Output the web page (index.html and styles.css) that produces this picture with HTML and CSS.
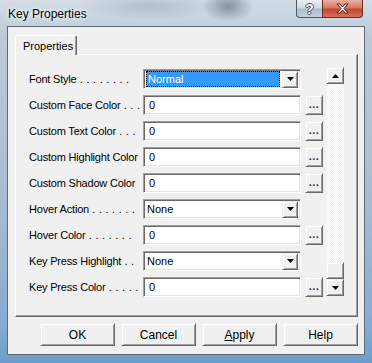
FILE: index.html
```html
<!DOCTYPE html>
<html lang="en">
<head>
  <meta charset="UTF-8" />
  <title>Key Properties</title>
  <link rel="stylesheet" href="styles.css">
</head>
<body>
  <div class="window">
    <!-- Title bar -->
    <div class="titlebar">
      <span class="title">Key Properties</span>
      <div class="caption-btns">
        <span class="cap-btn help-cap">?</span>
        <span class="cap-btn close-cap">
          <svg width="13" height="11" viewBox="0 0 13 11">
            <path d="M1 1h3l2.5 3 2.5-3h3l-4 4.5 4 4.5h-3l-2.5-3-2.5 3h-3l4-4.5z" fill="#fff" stroke="#5b1d14" stroke-width="1"/>
          </svg>
        </span>
      </div>
    </div>

    <div class="client">
      <div class="tabs">
        <span class="tab">Properties</span>
      </div>

      <div class="tab-panel">
        <div class="rows">
          <div class="row">
            <span class="label">Font Style<span class="lead"> . . . . . . . .</span></span>
            <div class="combo">
              <span class="combo-value selected">Normal</span>
              <span class="arrow-btn"><svg width="7" height="4" viewBox="0 0 7 4"><path d="M0 0h7l-3.5 4z" fill="#000"/></svg></span>
            </div>
          </div>
          <div class="row">
            <span class="label">Custom Face Color<span class="lead"> . . .</span></span>
            <div class="field">0</div>
            <span class="dots-btn">...</span>
          </div>
          <div class="row">
            <span class="label">Custom Text Color<span class="lead"> . . .</span></span>
            <div class="field">0</div>
            <span class="dots-btn">...</span>
          </div>
          <div class="row">
            <span class="label">Custom Highlight Color</span>
            <div class="field">0</div>
            <span class="dots-btn">...</span>
          </div>
          <div class="row">
            <span class="label">Custom Shadow Color</span>
            <div class="field">0</div>
            <span class="dots-btn">...</span>
          </div>
          <div class="row">
            <span class="label">Hover Action<span class="lead"> . . . . . . .</span></span>
            <div class="combo">
              <span class="combo-value">None</span>
              <span class="arrow-btn"><svg width="7" height="4" viewBox="0 0 7 4"><path d="M0 0h7l-3.5 4z" fill="#000"/></svg></span>
            </div>
          </div>
          <div class="row">
            <span class="label">Hover Color<span class="lead"> . . . . . . .</span></span>
            <div class="field">0</div>
            <span class="dots-btn">...</span>
          </div>
          <div class="row">
            <span class="label">Key Press Highlight<span class="lead"> . .</span></span>
            <div class="combo">
              <span class="combo-value">None</span>
              <span class="arrow-btn"><svg width="7" height="4" viewBox="0 0 7 4"><path d="M0 0h7l-3.5 4z" fill="#000"/></svg></span>
            </div>
          </div>
          <div class="row">
            <span class="label">Key Press Color<span class="lead"> . . . . .</span></span>
            <div class="field">0</div>
            <span class="dots-btn">...</span>
          </div>
        </div>

        <!-- Vertical scrollbar -->
        <div class="vscroll">
          <span class="sb-btn"><svg width="7" height="4" viewBox="0 0 7 4"><path d="M3.5 0l3.5 4h-7z" fill="#000"/></svg></span>
          <span class="sb-track"></span>
          <span class="sb-thumb"></span>
          <span class="sb-btn"><svg width="7" height="4" viewBox="0 0 7 4"><path d="M0 0h7l-3.5 4z" fill="#000"/></svg></span>
        </div>
      </div>

      <div class="buttons">
        <button class="dlg-btn">OK</button>
        <button class="dlg-btn">Cancel</button>
        <button class="dlg-btn"><u>A</u>pply</button>
        <button class="dlg-btn">Help</button>
      </div>
    </div>
  </div>
</body>
</html>
```

FILE: styles.css
```css
body {
  margin: 0;
  font-family: "Liberation Sans", Arial, sans-serif;
  font-size: 11px;
  color: #000;
}
.window {
  width: 372px;
  height: 363px;
  box-sizing: border-box;
  padding: 0 7px 8px 7px;
  display: flex;
  flex-direction: column;
  background:
    radial-gradient(ellipse 26px 16px at 228px 6px, rgba(70, 85, 100, 0.55), transparent),
    radial-gradient(ellipse 70px 14px at 150px 6px, rgba(120, 140, 160, 0.35), transparent),
    linear-gradient(180deg, #d4dde6 0%, #bccad8 10%, #a8bcd0 55%, #86abd0 90%, #6d9ccb 100%);
}
.titlebar {
  height: 26px;
  display: flex;
  justify-content: space-between;
  align-items: flex-start;
  flex-shrink: 0;
}
.title {
  font-size: 12px;
  padding: 7px 0 0 1px;
  text-shadow: 0 0 6px #fff, 0 0 3px #fff;
}
.caption-btns {
  display: flex;
  margin-right: 2px;
}
.cap-btn {
  height: 18px;
  box-sizing: border-box;
  display: flex;
  align-items: center;
  justify-content: center;
  border: 1px solid #4e5b68;
  border-top: none;
}
.help-cap {
  width: 26px;
  border-right: none;
  border-radius: 0 0 0 4px;
  background: linear-gradient(180deg, #e9eef3 0%, #d1dbe5 45%, #aebdcc 55%, #c3d0dd 100%);
  color: #f4f6f8;
  font-size: 14px;
  font-weight: bold;
  text-shadow: 1px 0 #4a5560, -1px 0 #4a5560, 0 1px #4a5560, 0 -1px #4a5560;
}
.close-cap {
  width: 41px;
  border-radius: 0 0 4px 0;
  border-color: #6b2a22;
  background: linear-gradient(180deg, #eab3a6 0%, #d77863 45%, #c4462f 55%, #d5705a 100%);
}
.client {
  flex: 1;
  background: #f0f0f0;
  border: 1px solid #5d6b79;
  display: flex;
  flex-direction: column;
}
.tabs {
  display: flex;
  padding: 8px 0 0 7px;
}
.tab {
  width: 62px;
  height: 20px;
  box-sizing: border-box;
  padding: 4px 0 0 7px;
  border-top: 1px solid #fff;
  border-left: 1px solid #fff;
  border-right: 1px solid #696969;
  box-shadow: inset -1px 0 #a0a0a0;
  border-radius: 2px 2px 0 0;
  margin-bottom: -1px;
  background: #f0f0f0;
  position: relative;
}
.tab-panel {
  margin-left: 7px;
  width: 343px;
  height: 263px;
  box-sizing: border-box;
  border-top: 1px solid #fff;
  border-left: 1px solid #fff;
  border-right: 1px solid #696969;
  border-bottom: 1px solid #696969;
  box-shadow: inset -1px -1px #a0a0a0;
  padding: 12px 0 0 13px;
  display: flex;
  align-items: flex-start;
}
.rows {
  margin-top: 2px;
  display: flex;
  flex-direction: column;
  gap: 6px;
}
.row {
  display: grid;
  grid-template-columns: 110px 158px 18px;
  column-gap: 4px;
  height: 20px;
  align-items: center;
}
.label {
  letter-spacing: -0.2px;
  white-space: nowrap;
}
.lead {
  letter-spacing: 0.25px;
}
.field,
.combo {
  height: 20px;
  box-sizing: border-box;
  background: #fff;
  border: 1px solid;
  border-color: #a0a0a0 #fff #fff #a0a0a0;
  box-shadow: inset 1px 1px #696969, inset -1px -1px #e3e3e3;
}
.field {
  padding: 3px 0 0 5px;
}
.combo {
  display: flex;
  align-items: center;
  padding: 1px 2px 1px 1px;
}
.combo-value {
  flex: 1;
  height: 16px;
  box-sizing: border-box;
  padding: 2px 0 0 2px;
  margin-right: 1px;
}
.combo-value.selected {
  background: #3399ff;
  color: #fff;
  outline: 1px dotted #000;
  outline-offset: -1px;
  margin: 0 2px 0 1px;
}
.arrow-btn,
.dots-btn,
.sb-btn,
.sb-thumb {
  box-sizing: border-box;
  background: #f0f0f0;
  border: 1px solid;
  border-color: #f0f0f0 #696969 #696969 #f0f0f0;
  box-shadow: inset 1px 1px #fff, inset -1px -1px #a0a0a0;
  display: flex;
  align-items: center;
  justify-content: center;
}
.arrow-btn {
  width: 16px;
  height: 17px;
}
.dots-btn {
  height: 20px;
  align-items: flex-end;
  padding-bottom: 4px;
  letter-spacing: 0.5px;
  font-weight: bold;
  color: #2a2a60;
}
.vscroll {
  width: 18px;
  height: 229px;
  margin-left: 3px;
  display: flex;
  flex-direction: column;
}
.sb-btn {
  height: 17px;
  flex-shrink: 0;
}
.sb-track {
  flex: 1;
  background-color: #fff;
  background-image: conic-gradient(#f0f0f0 25%, #fff 0 50%, #f0f0f0 0 75%, #fff 0);
  background-size: 2px 2px;
}
.sb-thumb {
  height: 17px;
  flex-shrink: 0;
}
.buttons {
  display: flex;
  gap: 6px;
  padding: 6px 0 0 32px;
}
.dlg-btn {
  width: 75px;
  height: 23px;
  font-family: "Liberation Sans", Arial, sans-serif;
  font-size: 12px;
  color: #000;
  background: #f0f0f0;
  border: 1px solid;
  border-color: #f0f0f0 #696969 #696969 #f0f0f0;
  box-shadow: inset 1px 1px #fff, inset -1px -1px #a0a0a0;
  padding: 0;
}
```
